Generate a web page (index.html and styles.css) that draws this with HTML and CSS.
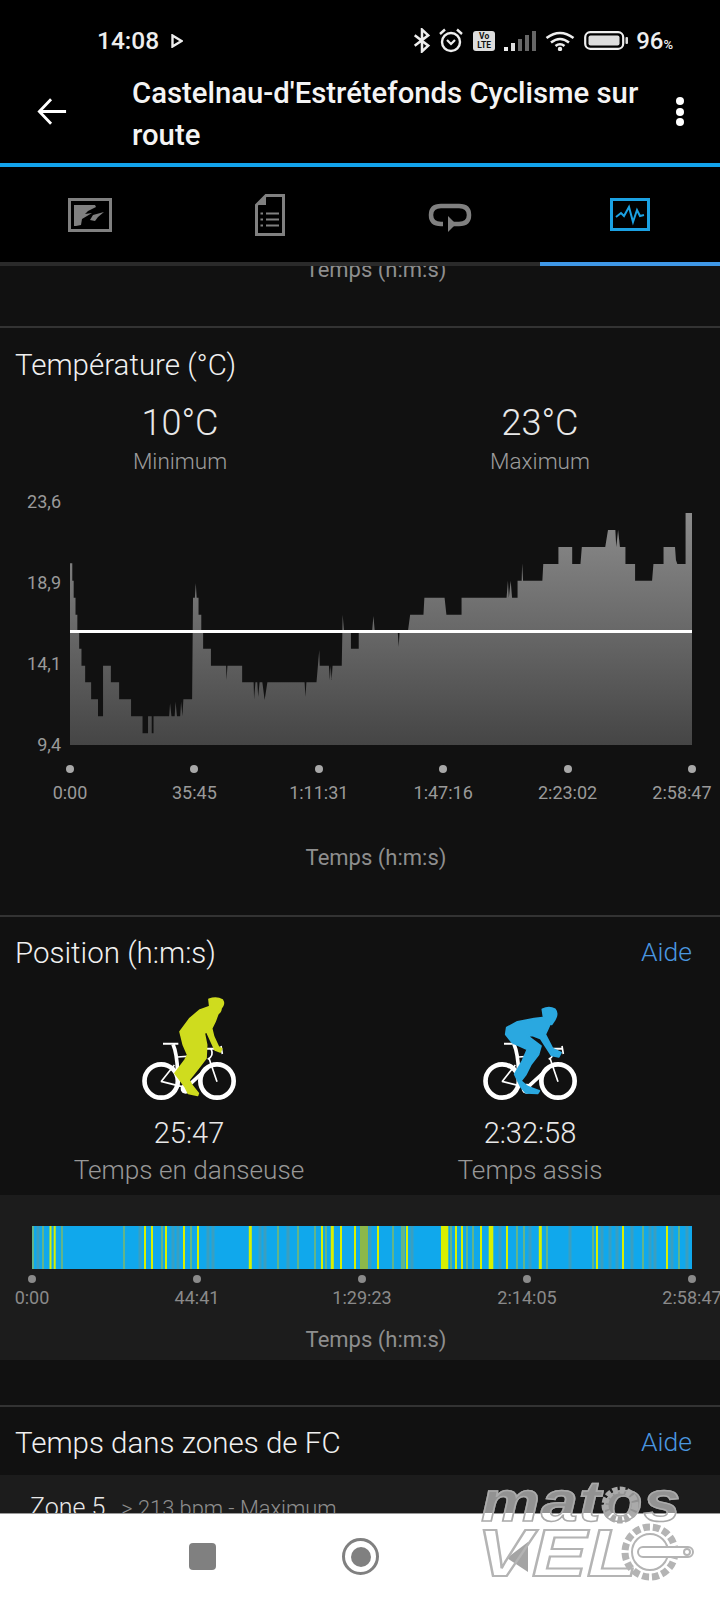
FILE: index.html
```html
<!DOCTYPE html>
<html lang="fr">
<head>
  <meta charset="UTF-8">
  <meta name="viewport" content="width=device-width, initial-scale=1.0">
  <title>Castelnau-d'Estrétefonds Cyclisme sur route</title>
  <link rel="stylesheet" href="styles.css">
</head>
<body>
  <svg class="defs" width="0" height="0">
    <g id="bike">
      <g fill="none" stroke="#fff">
        <circle cx="78.500" cy="273" r="50" stroke-width="14"/>
        <circle cx="246" cy="273" r="50" stroke-width="14"/>
        <path stroke-width="5" d="M78 275L118 225M78 274L150 292M246 275L222 205"/>
        <path stroke-width="6" d="M84 161H130M216 176H258"/>
        <path stroke-width="11" d="M114 163Q126 190 128 248M218 234L150 296"/>
        <path stroke-width="5" d="M128 201L186 197M228 176Q238 198 218 208M258 168L262 192"/>
      </g>
      <circle cx="152" cy="296" r="15" fill="#fff"/>
    </g>
  </svg>

  <div class="status">
    <span class="clock">14:08</span>
    <svg class="play" width="12" height="14" viewBox="0 0 12 14"><path d="M1.500 1.500L10.500 7L1.500 12.500Z" fill="none" stroke="#eee" stroke-width="2.400"/></svg>
    <div class="status-icons">
      <svg width="18" height="25" viewBox="0 0 17 24"><path d="M1.500 7L14.500 17L8.500 22.500V1.500L14.500 7L1.500 17" fill="none" stroke="#eee" stroke-width="2.400"/></svg>
      <svg class="alarm" width="26" height="25" viewBox="0 0 26 25">
        <circle cx="13" cy="14" r="9" fill="none" stroke="#eee" stroke-width="2.400"/>
        <path d="M9 12L13 16L17 12" fill="none" stroke="#eee" stroke-width="2.200"/>
        <path d="M2 6L7 1.500M24 6L19 1.500" stroke="#eee" stroke-width="2.400"/>
      </svg>
      <span class="volte">Vo<br>LTE</span>
      <svg class="signal" width="32" height="22" viewBox="0 0 32 22">
        <rect x="0" y="17" width="4" height="4" fill="#eee"/>
        <rect x="7" y="13" width="4" height="8" fill="#ddd"/>
        <rect x="14" y="9" width="4" height="12" fill="#666"/>
        <rect x="21" y="5" width="4" height="16" fill="#666"/>
        <rect x="28" y="1" width="4" height="20" fill="#666"/>
      </svg>
      <svg width="30" height="20" viewBox="0 0 30 20">
        <path d="M1.500 7Q15 -3 28.500 7M6 11.500Q15 4.500 24 11.500M10.500 15Q15 11.500 19.500 15" fill="none" stroke="#eee" stroke-width="2.600"/>
        <circle cx="15" cy="18" r="2.200" fill="#eee"/>
      </svg>
      <svg width="44" height="19" viewBox="0 0 44 19">
        <rect x="1.200" y="1.200" width="38" height="16.600" rx="5" fill="none" stroke="#eee" stroke-width="2.200"/>
        <rect x="4.500" y="4.500" width="31" height="10" rx="2" fill="#ddd"/>
        <rect x="41.500" y="6" width="2.500" height="7" rx="1" fill="#ddd"/>
      </svg>
      <span class="battery">96<small>%</small></span>
    </div>
  </div>

  <header class="appbar">
    <svg class="back" width="30" height="29" viewBox="0 0 32 30"><path d="M31 15H3M15 2L2.500 15L15 28" fill="none" stroke="#fff" stroke-width="3"/></svg>
    <h1>Castelnau-d'Estrétefonds Cyclisme sur route</h1>
    <div class="more"><i></i><i></i><i></i></div>
  </header>

  <nav class="tabs">
    <div class="tab">
      <svg width="44" height="34" viewBox="0 0 44 34">
        <rect x="1.500" y="1.500" width="41" height="31" fill="none" stroke="#808080" stroke-width="3"/>
        <path d="M6 7H27L28 9L20 13L17 16L24 15L14 21L13 27L8 28H6Z" fill="#808080"/>
        <path d="M22 22L25 17L36 14L30 19L27 23Z" fill="#808080"/>
      </svg>
    </div>
    <div class="tab">
      <svg width="30" height="42" viewBox="0 0 30 42">
        <path d="M11 1.500H28.500V40.500H1.500V11Z" fill="#000" stroke="#808080" stroke-width="3"/>
        <path d="M11 2V11H2Z" fill="#808080"/>
        <path d="M11 19.500H24M11 25.500H24M11 31.500H24M5.500 19.500H8M5.500 25.500H8M5.500 31.500H8" stroke="#808080" stroke-width="2.200"/>
      </svg>
    </div>
    <div class="tab">
      <svg class="loop" width="44" height="30" viewBox="0 0 44 30">
        <path d="M15 21H13Q3 21 3 12Q3 3 13 3H31Q41 3 41 12Q41 21 31 21H21" fill="none" stroke="#808080" stroke-width="4.500"/>
        <path d="M20 13L28 21L20 29Z" fill="#808080"/>
      </svg>
    </div>
    <div class="tab">
      <svg width="40" height="33" viewBox="0 0 40 33">
        <rect x="1.500" y="1.500" width="37" height="30" fill="none" stroke="#1ba1e2" stroke-width="3"/>
        <path d="M6 19L11 15L14 18L19 9L23 24L27 12L30 18L34 17" fill="none" stroke="#1ba1e2" stroke-width="2"/>
      </svg>
    </div>
  </nav>

  <main class="content">
    <div class="cut-axis"><p class="axis-title">Temps (h:m:s)</p></div>

    <section class="block temp">
      <h2>Température (°C)</h2>
      <div class="minmax">
        <div><b>10°C</b><span>Minimum</span></div>
        <div><b>23°C</b><span>Maximum</span></div>
      </div>
      <div class="chart">
        <div class="y-labels"><span>23,6</span><span>18,9</span><span>14,1</span><span>9,4</span></div>
        <div class="plot">
          <svg viewBox="152 99 1355 696" preserveAspectRatio="none">
            <defs>
              <linearGradient id="fade" x1="0" y1="0" x2="0" y2="1">
                <stop offset="0" stop-color="#8c8c8c"/>
                <stop offset="1" stop-color="#454545"/>
              </linearGradient>
            </defs>
            <path fill="url(#fade)" d="M152 795V250H157V302H160V353H164V404H168V455H172V506H177V557H185V607H198V658H213V709H224V557H241V607H259V658H285V709H310V760H322V709H330V760H334V709H368L370 670L373 709H380L382 665L385 709H392L394 665L397 709L399 658H418L420 353L424 353L426 310L428 353H432V404H438V455H442V506H459V557H492L493 600L495 557H527V607H552L553 658L556 607H560L562 650L565 607H571L576 660L582 607H663L665 650L667 607H689L695 510L696 557H716L718 600L720 557L722 600L724 557H744L746 404L749 455H764V506H781V455H810L813 408L816 455H866L868 500L870 455H888L893 404H922L924 353H968L972 404H1005V353H1103L1106 302L1108 353L1112 302L1115 353H1127V302H1136L1137 250L1139 302H1181L1183 252H1216V201H1246V252H1264L1267 201H1318L1324 150H1340L1342 201L1346 150L1350 201H1362V252H1383V302H1420L1423 252H1445V201H1470L1472 240L1475 252H1493V99H1507V795Z"/>
          </svg>
          <span class="avg"></span>
        </div>
      </div>
      <div class="x-axis chart-axis">
        <div><i></i><span>0:00</span></div>
        <div><i></i><span>35:45</span></div>
        <div><i></i><span>1:11:31</span></div>
        <div><i></i><span>1:47:16</span></div>
        <div><i></i><span>2:23:02</span></div>
        <div><i></i><span>2:58:47</span></div>
      </div>
      <p class="axis-title temp-axis">Temps (h:m:s)</p>
    </section>

    <section class="block position">
      <div class="head"><h2>Position (h:m:s)</h2><a>Aide</a></div>
      <div class="riders">
        <div class="rider">
          <svg class="bike" viewBox="-3 0 330 360">
            <use href="#bike"/>
            <g class="body-yellow">
              <path d="M222 28Q245 20 262 30Q270 42 258 55Q258 65 250 70L225 55Z"/>
              <path d="M222 50L250 68L240 95L230 115L236 140L250 170L260 176L256 186L240 180L215 125L208 130L215 165L213 205L190 235L162 270L170 285L190 310L188 316L160 310L150 290L120 250L150 210L158 195L145 165L135 125L165 85L195 60Z"/>
            </g>
          </svg>
          <b>25:47</b>
          <span>Temps en danseuse</span>
        </div>
        <div class="rider">
          <svg class="bike" viewBox="-3 0 330 360">
            <use href="#bike"/>
            <g class="body-blue" transform="translate(4.500 28)">
              <path d="M195 30Q215 20 232 30Q242 42 232 60L222 75L210 72L198 50Z"/>
              <path d="M195 55L218 72L210 90L203 105L225 148L250 160L244 172L222 168L190 118L165 108L150 110L190 140L183 165L160 195L145 225L130 245L150 262L185 275L180 282L145 280L130 262L112 225L135 185L150 150L105 130L85 105L88 85L120 68L170 58Z"/>
            </g>
          </svg>
          <b>2:32:58</b>
          <span>Temps assis</span>
        </div>
      </div>
    </section>

    <div class="band">
      <svg class="strip" viewBox="32 0 660 1" preserveAspectRatio="none">
        <rect x="32" y="0" width="660" height="1" fill="#10a8ec"/>
        <rect x="360" y="0" width="8" height="1" fill="#8cb84a"/>
        <path class="teal" d="M38 0V1M140 0V1M173 0V1M178 0V1M208 0V1M213 0V1M260 0V1M265 0V1M288 0V1M370 0V1M412 0V1M500 0V1M530 0V1M570 0V1M602 0V1M610 0V1M617 0V1M632 0V1M650 0V1M655 0V1M672 0V1M687 0V1"/>
        <path class="dim" d="M33 0V1M43 0V1M62 0V1M124 0V1M162 0V1M191 0V1M278 0V1M298 0V1M315 0V1M326 0V1M393 0V1M402 0V1M404 0V1M451 0V1M467 0V1M473 0V1M517 0V1M524 0V1M547 0V1M593 0V1M643 0V1M679 0V1"/>
        <path class="lime" d="M50.500 0V1M54.700 0V1M145 0V1M152 0V1M166 0V1M184 0V1M198 0V1M341 0V1M378 0V1M407 0V1M456 0V1M462 0V1M481 0V1M507 0V1M597 0V1M623 0V1M667 0V1M355 0V1M322 0V1"/>
        <path class="lime wide" d="M250.300 0V1M332.300 0V1M540.300 0V1"/>
        <rect x="441" y="0" width="7.300" height="1" fill="#d8f000"/>
        <rect x="488.700" y="0" width="4.600" height="1" fill="#d8f000"/>
      </svg>
      <div class="x-axis strip-axis">
        <div><i></i><span>0:00</span></div>
        <div><i></i><span>44:41</span></div>
        <div><i></i><span>1:29:23</span></div>
        <div><i></i><span>2:14:05</span></div>
        <div><i></i><span>2:58:47</span></div>
      </div>
      <p class="axis-title strip-title">Temps (h:m:s)</p>
    </div>

    <section class="block zones">
      <div class="head"><h2>Temps dans zones de FC</h2><a>Aide</a></div>
    </section>
    <div class="zone-row"><b>Zone 5</b><span>&gt; 213 bpm - Maximum</span></div>
  </main>

  <footer class="navbar">
    <span class="nav-square"></span>
    <span class="nav-circle"><i></i></span>
    <svg class="nav-back" width="24" height="32" viewBox="0 0 24 32"><path d="M23 1V31L2 17Z" fill="#a4a4a4"/></svg>
  </footer>

  <div class="watermark">
    <span class="wm-top">matos</span>
    <span class="wm-bottom">VEL</span>
    <svg class="wm-gears" width="110" height="100" viewBox="0 0 110 100">
      <circle cx="35" cy="19" r="15" fill="none" stroke="#aaa" stroke-width="7" stroke-dasharray="5 2"/>
      <circle cx="65" cy="66" r="25" fill="none" stroke="#b4b4b4" stroke-width="7" stroke-dasharray="7 3"/>
      <circle cx="65" cy="66" r="18" fill="none" stroke="#b4b4b4" stroke-width="2"/>
      <rect x="53" y="61" width="55" height="10" rx="5" fill="#fff" stroke="#b4b4b4" stroke-width="2"/>
      <circle cx="102" cy="66" r="3" fill="none" stroke="#b4b4b4" stroke-width="2"/>
    </svg>
  </div>
</body>
</html>
```

FILE: styles.css
```css
* { box-sizing: border-box; }
html, body { margin: 0; padding: 0; }
body { width: 720px; height: 1600px; overflow: hidden; position: relative; display: flex; flex-direction: column; background: #111; font-family: Roboto, "Liberation Sans", sans-serif; color: #8e8e8e; }
.defs { position: absolute; }
h1, h2, p { margin: 0; }

.status { height: 70px; flex: none; background: #000; display: flex; align-items: center; padding: 11px 47px 0 97px; color: #eee; }
.clock { font-size: 24.500px; font-weight: 500; }
.play { margin-left: 12px; }
.status-icons { margin-left: auto; display: flex; align-items: center; gap: 9px; }
.alarm { margin-left: -2px; }
.volte { width: 22px; height: 20px; background: #ddd; color: #111; border-radius: 3px; font-size: 8.500px; line-height: 9px; font-weight: 700; text-align: center; padding-top: 1px; }
.battery { font-size: 24px; font-weight: 500; margin-left: -1px; }
.battery small { font-size: 13px; }

.appbar { height: 97px; flex: none; background: #000; border-bottom: 4px solid #12a3ec; display: flex; align-items: center; padding: 0 37px; }
.back { flex: none; margin-bottom: 10px; }
.appbar h1 { width: 530px; margin: 0 0 6px 65px; font-size: 29.300px; line-height: 42px; font-weight: 500; color: #f4f4f4; }
.more { margin: 0 -1px 10px auto; display: flex; flex-direction: column; gap: 2.500px; }
.more i { width: 8px; height: 8px; border-radius: 50%; background: #fff; }

.tabs { height: 99px; flex: none; background: #000; display: grid; grid-template-columns: repeat(4, 180px); border-bottom: 4px solid #2a2a2a; }
.tab { display: flex; align-items: center; justify-content: center; height: 99px; padding-bottom: 4px; }
.tab:last-child { border-bottom: 4px solid #3f97e6; padding-bottom: 0; }
.loop { margin-top: 6px; }

.content { flex: 1; overflow: hidden; }
.axis-title { font-size: 22px; line-height: 26px; text-align: center; padding-left: 32px; color: #8e8e8e; }
.cut-axis { height: 60px; overflow: hidden; }
.cut-axis .axis-title { margin-top: -9px; }

.block { border-top: 2px solid #333; }
.block h2 { font-size: 29.500px; line-height: 40px; font-weight: 300; color: #f0f0f0; }
.head { display: flex; justify-content: space-between; }
.head a { font-size: 26.500px; line-height: 38px; font-weight: 300; color: #4a97e0; }

.temp { padding: 17px 0 44px; }
.temp h2 { padding-left: 15px; }
.minmax { display: flex; margin-top: 18px; }
.minmax div { width: 360px; display: flex; flex-direction: column; align-items: center; }
.minmax b { font-size: 36px; line-height: 40px; font-weight: 300; color: #e8e8e8; }
.minmax span { font-size: 22.500px; line-height: 28px; margin-top: 4px; font-weight: 300; color: #9c9c9c; }

.chart { display: grid; grid-template-columns: 61px 622px; gap: 9px; height: 267px; margin-top: 15px; }
.y-labels { display: flex; flex-direction: column; justify-content: space-between; align-items: flex-end; font-size: 18px; line-height: 24px; color: #9a9a9a; }
.plot { position: relative; margin-top: 23px; height: 232px; }
.plot svg { display: block; width: 622px; height: 232px; }
.avg { position: absolute; left: 0; right: 0; top: 117px; height: 3px; background: #fff; }

.x-axis { display: flex; justify-content: space-between; font-size: 18px; line-height: 24px; color: #9a9a9a; }
.x-axis div { width: 0; display: flex; flex-direction: column; align-items: center; }
.x-axis span { white-space: nowrap; }
.x-axis i { flex: none; width: 8px; height: 8px; border-radius: 50%; background: #a8a8a8; }
.chart-axis { margin: 8px 28px 0 70px; }
.chart-axis i { margin-bottom: 8px; }
.chart-axis div:last-child span { transform: translateX(-10px); }
.temp-axis { margin-top: 40px; }

.position { padding: 16px 28px 0 15px; }
.riders { display: flex; gap: 1px; margin: 17px 0 0 4px; }
.rider { flex: none; width: 340px; display: flex; flex-direction: column; align-items: center; }
.bike { width: 110px; height: 120px; display: block; }
.body-yellow { fill: #cfdc1e; stroke: #cfdc1e; stroke-width: 5; stroke-linejoin: round; }
.body-blue { fill: #2aa8e0; stroke: #2aa8e0; stroke-width: 6; stroke-linejoin: round; }
.rider b { font-size: 29px; line-height: 36px; font-weight: 300; color: #e8e8e8; margin-top: 5px; }
.rider span { font-size: 26.200px; line-height: 34px; font-weight: 300; margin-top: 2px; white-space: nowrap; color: #989898; }

.band { background: #1c1c1c; height: 165px; margin-top: 8px; padding-top: 31px; }
.strip { display: block; width: 660px; height: 43px; margin-left: 32px; }
.strip path { fill: none; }
.strip .lime { stroke: #d8f000; stroke-width: 2; }
.strip .lime.wide { stroke-width: 3; }
.strip .dim { stroke: #7fb96a; stroke-width: 1.500; }
.strip .teal { stroke: #3a9fc0; stroke-width: 3; }
.strip-axis { margin: 6px 28px 0 32px; color: #8a8a8a; }
.strip-axis i { background: #8a8a8a; margin-bottom: 3px; }
.strip-title { margin-top: 17px; }

.zones { margin-top: 45px; padding: 16px 28px 0 15px; }
.zone-row { background: #1c1c1c; margin-top: 12px; height: 40px; padding: 19px 0 0 30px; display: flex; align-items: baseline; gap: 16px; line-height: 28px; white-space: nowrap; }
.zone-row b { font-size: 25px; font-weight: 300; color: #e8e8e8; }
.zone-row span { font-size: 21.800px; font-weight: 300; }

.navbar { height: 87px; flex: none; background: #fff; border-top: 1px solid #999; display: flex; align-items: center; padding-bottom: 1px; }
.nav-square { width: 27px; height: 27px; border-radius: 4px; background: #808080; margin-left: 189px; }
.nav-circle { width: 37px; height: 37px; border-radius: 50%; border: 3.500px solid #808080; margin-left: 126px; display: flex; align-items: center; justify-content: center; }
.nav-circle i { width: 20px; height: 20px; border-radius: 50%; background: #808080; }
.nav-back { margin-left: 126px; }

/* site watermark over the bottom right corner */
.watermark { position: absolute; left: 477px; top: 1486px; width: 220px; height: 100px; }
.wm-top { position: absolute; left: 4px; top: -14px; font: italic 700 58px/58px "Liberation Sans", sans-serif; letter-spacing: 1px; color: transparent; background: linear-gradient(#929292 0 41px, #fff 41px); -webkit-background-clip: text; background-clip: text; -webkit-text-stroke: 1.500px #aaa; transform: scaleX(1.14); transform-origin: left top; }
.wm-bottom { position: absolute; left: 0; top: 34px; font: italic 700 66px/66px "Liberation Sans", sans-serif; color: transparent; -webkit-text-stroke: 2px #b4b4b4; transform: scaleX(1.25); transform-origin: left top; }
.wm-gears { position: absolute; left: 108px; top: 0; }
```
